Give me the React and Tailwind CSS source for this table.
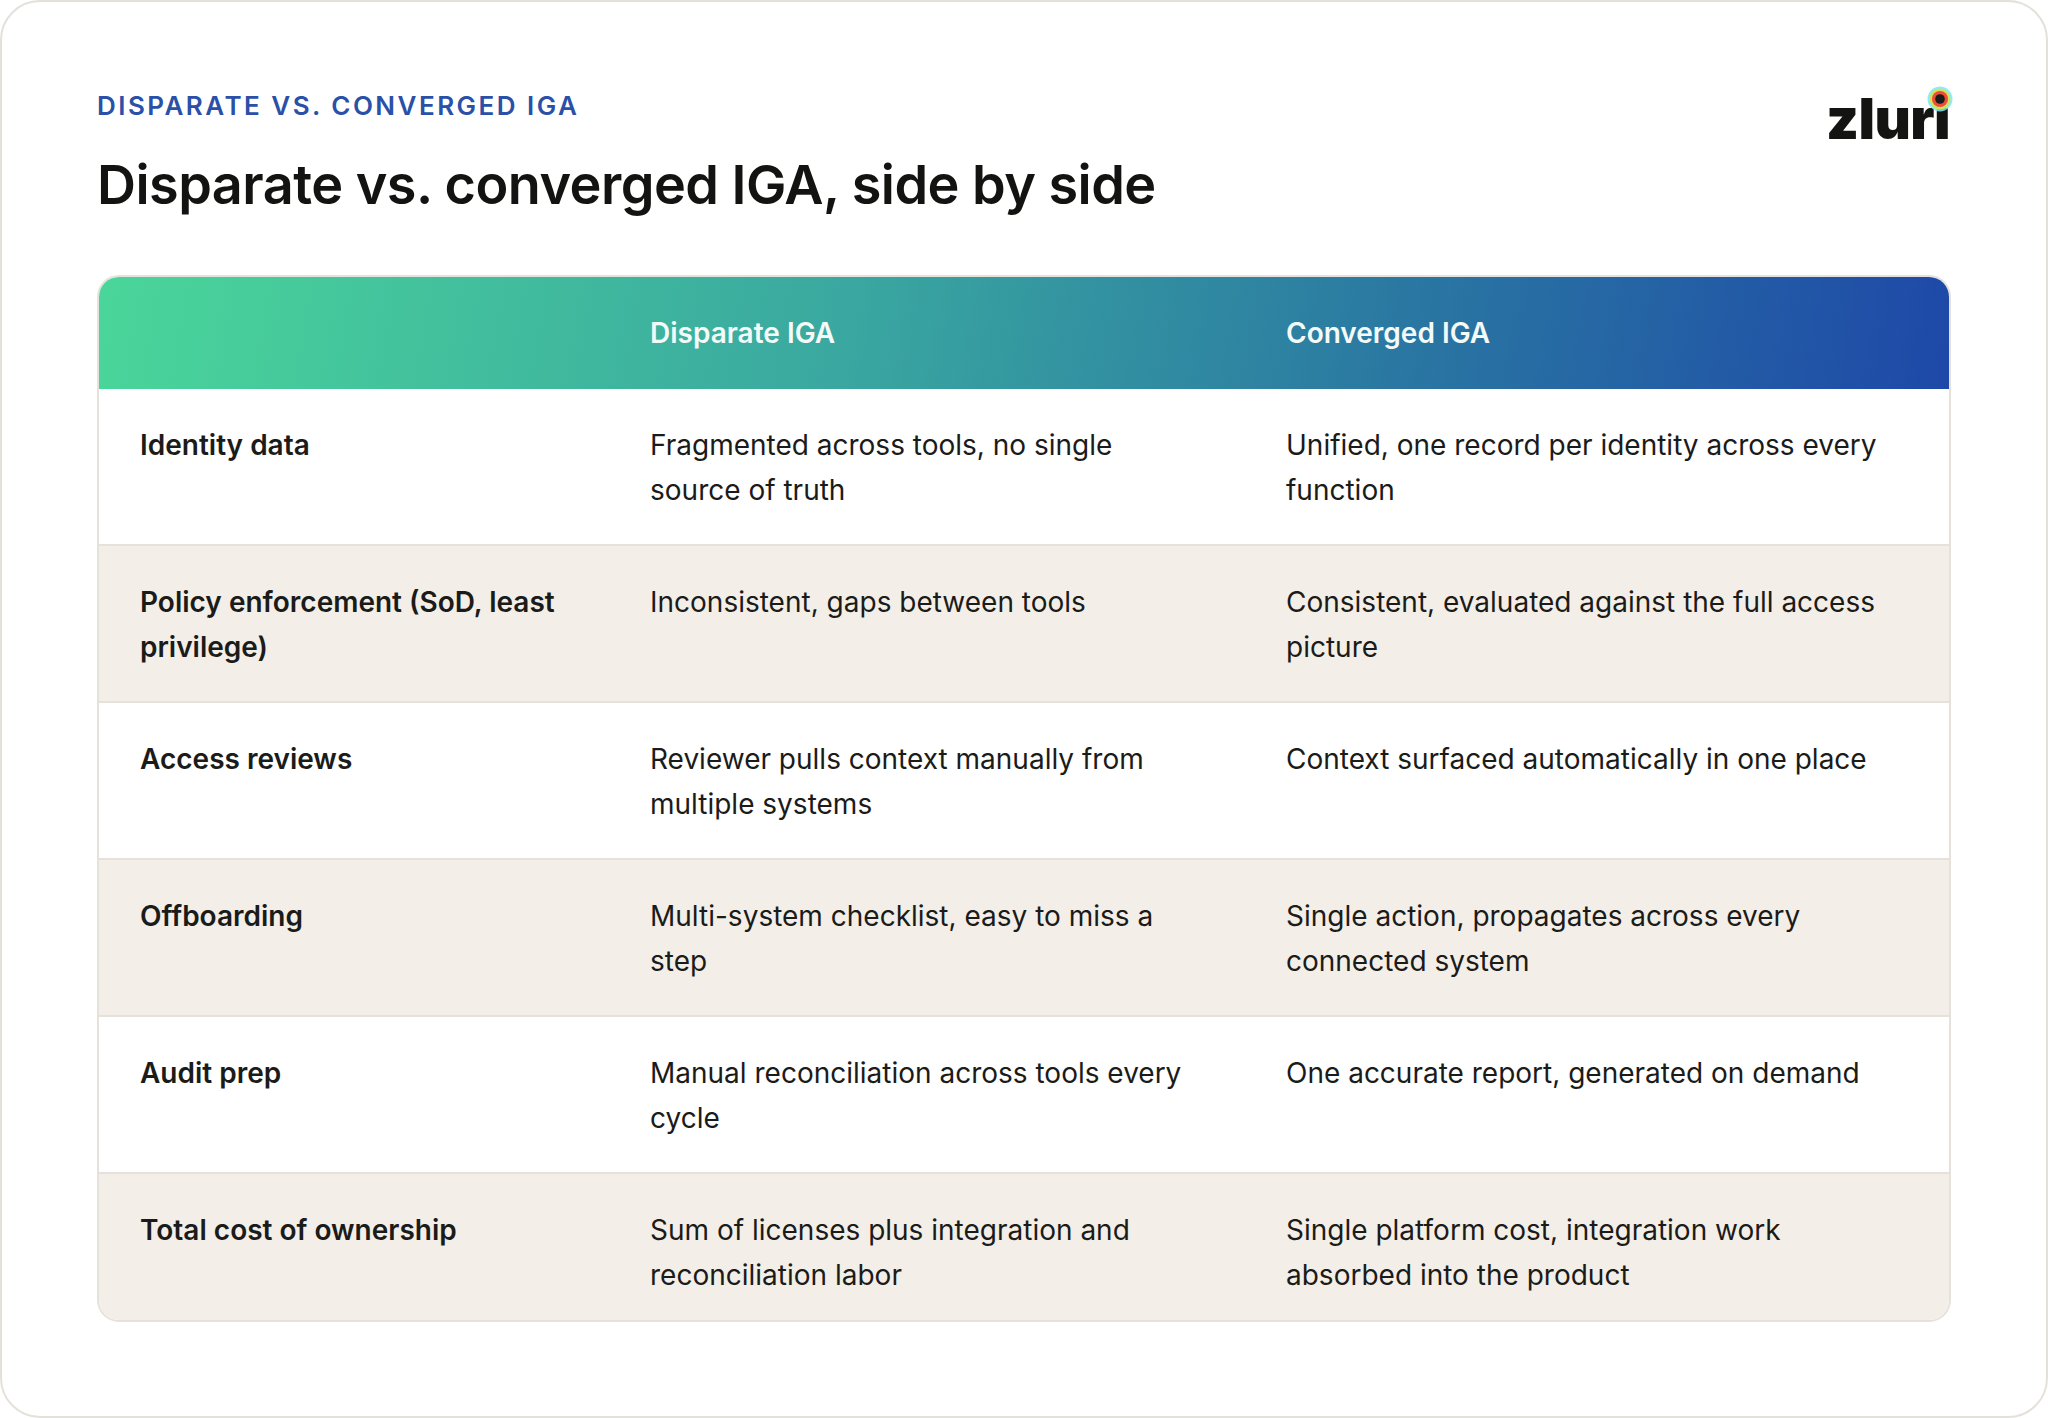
const rows = [
  {
    label: "Identity data",
    disparate: "Fragmented across tools, no single source of truth",
    converged: "Unified, one record per identity across every function",
  },
  {
    label: "Policy enforcement (SoD, least privilege)",
    disparate: "Inconsistent, gaps between tools",
    converged: "Consistent, evaluated against the full access picture",
  },
  {
    label: "Access reviews",
    disparate: "Reviewer pulls context manually from multiple systems",
    converged: "Context surfaced automatically in one place",
  },
  {
    label: "Offboarding",
    disparate: "Multi-system checklist, easy to miss a step",
    converged: "Single action, propagates across every connected system",
  },
  {
    label: "Audit prep",
    disparate: "Manual reconciliation across tools every cycle",
    converged: "One accurate report, generated on demand",
  },
  {
    label: "Total cost of ownership",
    disparate: "Sum of licenses plus integration and reconciliation labor",
    converged: "Single platform cost, integration work absorbed into the product",
  },
];

function Logo() {
  return (
    <div className="relative">
      <span className="block text-[56px] font-black leading-none tracking-[-0.01em] text-[#141412]">
        zlurı
      </span>
      <svg className="absolute right-[-3px] top-[-5px]" width="26" height="26" viewBox="0 0 26 26">
        <circle cx="13" cy="13" r="12.5" fill="#7fe6f6" opacity="0.85" />
        <circle cx="13" cy="13" r="10.5" fill="#cfe45a" />
        <circle cx="13" cy="13" r="8" fill="#ee4b3b" />
        <circle cx="13" cy="13" r="4.8" fill="#1c1b1a" />
      </svg>
    </div>
  );
}

export default function App() {
  return (
    <div className="h-[1418px] w-full bg-white font-['Inter',sans-serif] text-[#1b1b19]">
      <div className="flex h-full flex-col rounded-[40px] border-2 border-[#e4e1da] px-[95px] pt-[88px]">
        <div className="flex items-start justify-between">
          <div>
            <p className="text-[26px] font-semibold uppercase leading-[32px] tracking-[0.095em] text-[#2a50a8]">
              Disparate vs. converged IGA
            </p>
            <h1 className="mt-[30px] text-[54px] font-semibold leading-[65px] tracking-[-0.01em] text-[#131311]">
              Disparate vs. converged IGA, side by side
            </h1>
          </div>
          <div className="mr-[1px] mt-[1px]">
            <Logo />
          </div>
        </div>

        <div className="mt-[58px] overflow-hidden rounded-[22px] border-2 border-[#e6e2db]">
          <div className="grid h-[112px] grid-cols-[510px_636px_1fr] items-center bg-[linear-gradient(100deg,#4ad69a_0%,#3aa8a0_40%,#2a78a2_70%,#1e48a8_100%)] text-[28px] font-semibold leading-[34px] text-[#f4faf8]">
            <div />
            <div className="pl-[41px]">Disparate IGA</div>
            <div className="pl-[41px]">Converged IGA</div>
          </div>
          {rows.map((row, i) => (
            <div
              key={row.label}
              className={
                "grid grid-cols-[510px_636px_1fr] pt-[34px] text-[28px] leading-[45px] " +
                (i % 2 === 1 ? "bg-[#f3efe8] " : "bg-white ") +
                (i === rows.length - 1 ? "h-[146px]" : "h-[157px] border-b-2 border-[#e6e2db]")
              }
            >
              <div className="pl-[41px] pr-[40px] font-semibold">{row.label}</div>
              <div className="pl-[41px] pr-[50px]">{row.disparate}</div>
              <div className="pl-[41px] pr-[40px]">{row.converged}</div>
            </div>
          ))}
        </div>
      </div>
    </div>
  );
}
